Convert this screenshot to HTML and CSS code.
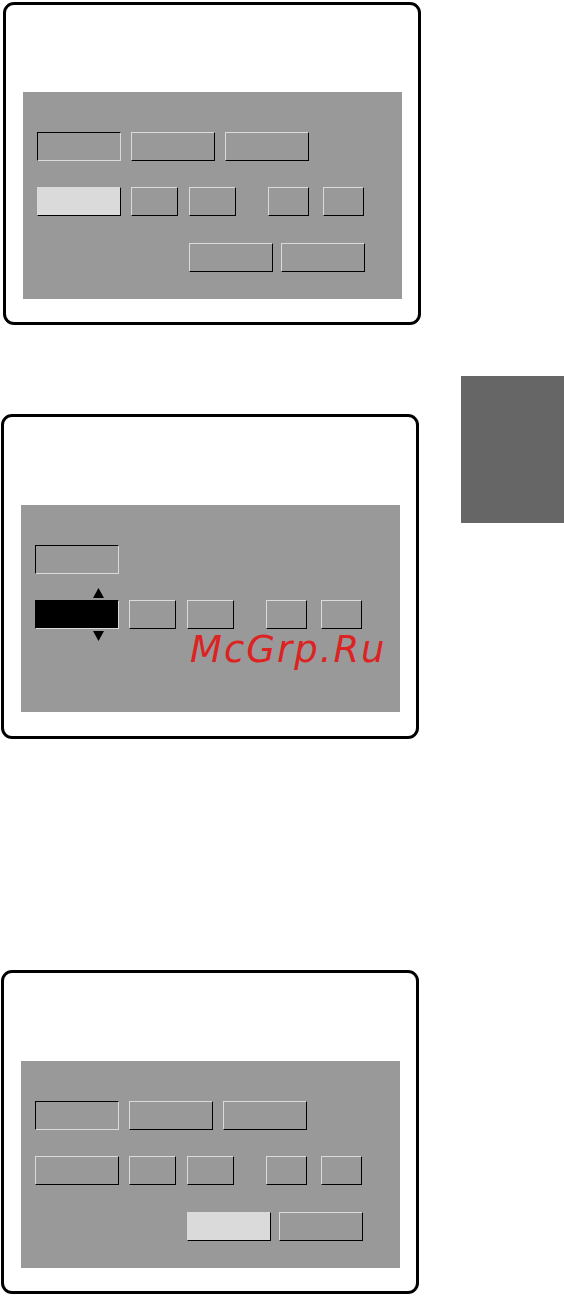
FILE: index.html
```html
<!DOCTYPE html>
<html>
<head>
<meta charset="utf-8">
<title>Screens</title>
<link rel="stylesheet" href="styles.css">
</head>
<body>
<div class="page">
  <div class="col">
    <section class="screen s1">
      <div class="panel">
        <div class="row">
          <div class="btn sunken w84"></div>
          <div class="btn raised w84 g10"></div>
          <div class="btn raised w84 g10"></div>
        </div>
        <div class="row">
          <div class="btn lit w84"></div>
          <div class="btn raised w47 g10"></div>
          <div class="btn raised w47 g11"></div>
          <div class="btn raised w41 g32"></div>
          <div class="btn raised w41 g14"></div>
        </div>
        <div class="row r3">
          <div class="btn raised w84 ind"></div>
          <div class="btn raised w84 g8"></div>
        </div>
      </div>
    </section>

    <section class="screen s2">
      <div class="panel">
        <div class="row">
          <div class="btn sunken w84"></div>
        </div>
        <div class="row">
          <div class="btn active w84">
            <svg class="arrow up" width="11" height="10" viewBox="0 0 11 10"><polygon points="5.5,0 11,10 0,10"/></svg>
            <svg class="arrow down" width="11" height="10" viewBox="0 0 11 10"><polygon points="0,0 11,0 5.5,10"/></svg>
          </div>
          <div class="btn raised w47 g10"></div>
          <div class="btn raised w47 g11"></div>
          <div class="btn raised w41 g32"></div>
          <div class="btn raised w41 g14"></div>
        </div>
        <div class="watermark">McGrp.Ru</div>
      </div>
    </section>

    <section class="screen s3">
      <div class="panel">
        <div class="row">
          <div class="btn sunken w84"></div>
          <div class="btn raised w84 g10"></div>
          <div class="btn raised w84 g10"></div>
        </div>
        <div class="row">
          <div class="btn raised w84"></div>
          <div class="btn raised w47 g10"></div>
          <div class="btn raised w47 g11"></div>
          <div class="btn raised w41 g32"></div>
          <div class="btn raised w41 g14"></div>
        </div>
        <div class="row r3">
          <div class="btn lit w84 ind"></div>
          <div class="btn raised w84 g8"></div>
        </div>
      </div>
    </section>
  </div>
  <div class="tab"></div>
</div>
</body>
</html>
```

FILE: styles.css
```css
html, body {
  margin: 0;
  padding: 0;
  background: #ffffff;
  font-family: "DejaVu Sans", sans-serif;
}

.page {
  display: grid;
  grid-template-columns: 461px 103px;
  width: 564px;
  height: 1296px;
  overflow: hidden;
}

.col {
  display: flex;
  flex-direction: column;
}

.screen {
  box-sizing: border-box;
  width: 418px;
  border: 3px solid #000;
  border-radius: 11px;
  padding: 88px 0 0 17px;
  background: #fff;
}

.s1 {
  margin: 2px 0 0 3px;
  height: 323px;
  padding-top: 87px;
}

.s2 {
  margin: 89px 0 0 1px;
  height: 325px;
}

.s3 {
  margin: 231px 0 0 1px;
  height: 324px;
}

.panel {
  position: relative;
  box-sizing: border-box;
  width: 379px;
  height: 207px;
  background: #999999;
  padding: 40px 0 0 14px;
  display: flex;
  flex-direction: column;
  gap: 26px;
}

.row {
  display: flex;
  height: 29px;
}

.r3 {
  margin-top: 1px;
}

.btn {
  box-sizing: border-box;
  height: 29px;
  border: 1px solid;
  flex: none;
}

.raised {
  border-color: #dadada #000 #000 #dadada;
}

.sunken {
  border-color: #000 #dadada #dadada #000;
}

.lit {
  background: #dadada;
  border-color: #dadada #000 #000 #dadada;
}

.active {
  position: relative;
  background: #000;
  border-color: #000 #dadada #dadada #000;
}

.w84 { width: 84px; }
.w47 { width: 47px; }
.w41 { width: 41px; }

.g8 { margin-left: 8px; }
.g10 { margin-left: 10px; }
.g11 { margin-left: 11px; }
.g14 { margin-left: 14px; }
.g32 { margin-left: 32px; }
.ind { margin-left: 152px; }

.arrow {
  position: absolute;
  left: 57px;
  display: block;
  fill: #000;
}

.arrow.up { top: -13px; }
.arrow.down { top: 30px; }

.watermark {
  position: absolute;
  left: 169px;
  top: 126px;
  font-family: "DejaVu Sans", sans-serif;
  font-style: italic;
  font-size: 37px;
  line-height: 37px;
  letter-spacing: 2px;
  color: #dd2222;
  white-space: nowrap;
}

.tab {
  margin-top: 376px;
  height: 147px;
  background: #666666;
}
```
